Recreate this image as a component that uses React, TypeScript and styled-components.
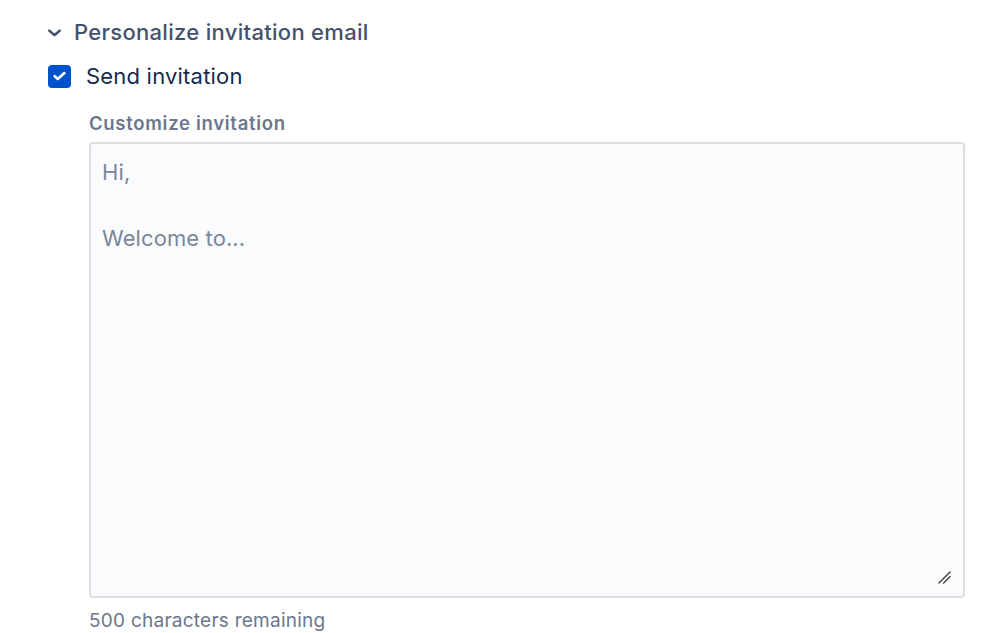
import React, { useState } from "react";
import styled, { createGlobalStyle } from "styled-components";

const GlobalStyle = createGlobalStyle`
  html, body {
    margin: 0;
    padding: 0;
    background: #ffffff;
    font-family: Inter, "Noto Sans", "Liberation Sans", sans-serif;
  }
`;

const MAX_LENGTH = 500;

const App = () => {
  const [sendInvitation, setSendInvitation] = useState<boolean>(true);
  const [message, setMessage] = useState<string>("");

  return (
    <>
      <GlobalStyle />
      <Container>
        <SectionHeader type="button">
          <Chevron viewBox="0 0 14 8" aria-hidden="true">
            <polyline
              points="1.5,1.5 7,6.3 12.5,1.5"
              fill="none"
              stroke="currentColor"
              strokeWidth="2.8"
              strokeLinecap="round"
              strokeLinejoin="round"
            />
          </Chevron>
          <SectionTitle>Personalize invitation email</SectionTitle>
        </SectionHeader>

        <CheckboxRow>
          <HiddenInput
            type="checkbox"
            checked={sendInvitation}
            onChange={(e) => setSendInvitation(e.target.checked)}
          />
          <CheckBox checked={sendInvitation}>
            {sendInvitation && (
              <svg viewBox="0 0 14 10" width="13" height="10" aria-hidden="true">
                <polyline
                  points="1.8,5.2 5.2,8.2 12.2,1.8"
                  fill="none"
                  stroke="#ffffff"
                  strokeWidth="2.8"
                  strokeLinecap="round"
                  strokeLinejoin="round"
                />
              </svg>
            )}
          </CheckBox>
          <CheckboxLabel>Send invitation</CheckboxLabel>
        </CheckboxRow>

        <Field>
          <FieldLabel htmlFor="invite-message">Customize invitation</FieldLabel>
          <TextAreaWrapper>
            <TextArea
              id="invite-message"
              placeholder={"Hi,\n\nWelcome to..."}
              maxLength={MAX_LENGTH}
              value={message}
              onChange={(e) => setMessage(e.target.value)}
            />
            <ResizeGrip viewBox="0 0 14 14" aria-hidden="true">
              <line x1="1" y1="13" x2="13" y2="1" />
              <line x1="6" y1="13" x2="13" y2="6" />
            </ResizeGrip>
          </TextAreaWrapper>
          <HelperText>
            {MAX_LENGTH - message.length} characters remaining
          </HelperText>
        </Field>
      </Container>
    </>
  );
};

const Container = styled.div`
  display: flex;
  flex-direction: column;
  padding: 16px 34px 0 46px;
`;

const SectionHeader = styled.button`
  display: flex;
  align-items: center;
  gap: 13px;
  height: 32px;
  padding: 0 0 0 2px;
  border: none;
  background: none;
  cursor: pointer;
  color: #42526e;
  font-family: inherit;
`;

const Chevron = styled.svg`
  width: 13px;
  height: 8px;
  margin-top: 1px;
  color: #42526e;
`;

const SectionTitle = styled.span`
  font-size: 22px;
  font-weight: 500;
  line-height: 32px;
  color: #42526e;
  letter-spacing: 0.3px;
`;

const CheckboxRow = styled.label`
  position: relative;
  display: flex;
  align-items: center;
  gap: 15px;
  margin-top: 12px;
  padding-left: 2px;
  cursor: pointer;
`;

const HiddenInput = styled.input`
  position: absolute;
  opacity: 0;
  width: 0;
  height: 0;
  margin: 0;
`;

const CheckBox = styled.span<{ checked: boolean }>`
  display: flex;
  align-items: center;
  justify-content: center;
  width: 23px;
  height: 23px;
  box-sizing: border-box;
  border-radius: 4px;
  background: ${({ checked }) => (checked ? "#0052cc" : "#fafbfc")};
  border: 2px solid ${({ checked }) => (checked ? "#0052cc" : "#dfe1e6")};
`;

const CheckboxLabel = styled.span`
  font-size: 22px;
  line-height: 32px;
  color: #172b4d;
  letter-spacing: 0.2px;
`;

const Field = styled.div`
  display: flex;
  flex-direction: column;
  padding-left: 43px;
  margin-top: 19px;
`;

const FieldLabel = styled.label`
  font-size: 18.5px;
  font-weight: 600;
  line-height: 24px;
  color: #6b778c;
  margin-bottom: 7px;
  letter-spacing: 0.7px;
`;

const TextAreaWrapper = styled.div`
  position: relative;
  display: flex;
`;

const TextArea = styled.textarea`
  box-sizing: border-box;
  width: 100%;
  height: 456px;
  padding: 12px 11px;
  border: 2px solid #dcdfe4;
  border-radius: 4px;
  background: #fafbfc;
  color: #172b4d;
  font-family: inherit;
  font-size: 22px;
  line-height: 33px;
  letter-spacing: 0.1px;
  resize: none;
  outline: none;

  &::placeholder {
    color: #7a869a;
  }

  &:focus {
    background: #ffffff;
    border-color: #4c9aff;
  }
`;

const ResizeGrip = styled.svg`
  position: absolute;
  right: 14px;
  bottom: 14px;
  width: 13px;
  height: 13px;
  pointer-events: none;

  line {
    stroke: #3a3a3a;
    stroke-width: 1.4;
    stroke-linecap: round;
  }
`;

const HelperText = styled.span`
  margin-top: 11px;
  font-size: 19px;
  line-height: 24px;
  color: #6b778c;
  letter-spacing: 0.25px;
`;

export default App;
